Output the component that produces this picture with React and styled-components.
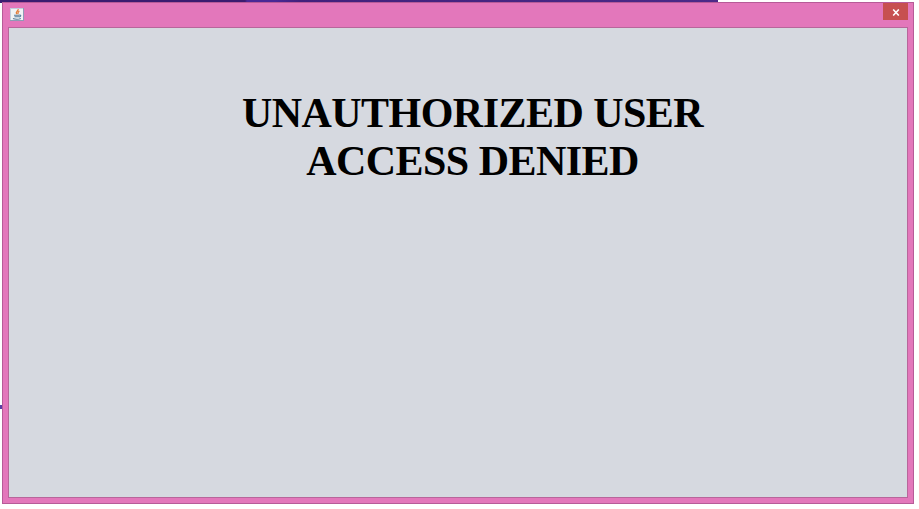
import React from 'react';
import styled, { createGlobalStyle } from 'styled-components';

const GlobalStyle = createGlobalStyle`
  * { box-sizing: border-box; }
  body { margin: 0; background: #fff; overflow: hidden; }
`;

const Desktop = styled.div`
  width: 919px;
  height: 509px;
  padding: 2px 0 0 2px;
  background:
    linear-gradient(#5740a5, #5740a5) 0 405px / 2px 4px no-repeat,
    linear-gradient(90deg, #3b1c70 0, #3b1c70 245px, #4a2896 247px, #4a2896 275px, #42217c 300px, #4b2a88 100%) 0 0 / 718px 3px no-repeat,
    #fff;
`;

const Window = styled.main`
  display: flex;
  flex-direction: column;
  width: 912px;
  height: 502px;
  padding: 0 5px 5px;
  border: 1px solid #b75b98;
  background: #e377bb;
`;

const TitleBar = styled.header`
  display: flex;
  justify-content: space-between;
  align-items: flex-start;
  flex: 0 0 24px;
`;

const AppIcon = styled.svg`
  display: block;
  width: 14px;
  height: 13px;
  margin: 5px 0 0 2px;
`;

const CloseButton = styled.button`
  display: flex;
  align-items: center;
  justify-content: center;
  width: 25px;
  height: 17px;
  margin: 0;
  padding: 1px 0 0;
  border: 0;
  background: #c75050;
`;

const Content = styled.section`
  flex: 1;
  padding: 61px 0 0 29px;
  border: 1px solid #b8669b;
  background: #d6d9e0;
`;

const Message = styled.h1`
  margin: 0;
  color: #000;
  font: bold 42px/48px "Liberation Serif", "Times New Roman", serif;
  letter-spacing: -0.53px;
  text-align: center;
`;

const MessageLine = styled.span`
  display: block;
`;

function JavaIcon() {
  return (
    <AppIcon viewBox="0 0 14 13" aria-hidden="true">
      <rect width="14" height="13" fill="#8f9bb5" />
      <rect width="13" height="12" fill="#c3cedd" />
      <rect x="1" y="1" width="12" height="11" fill="#f0f3f5" />
      <path d="M8.2 1.2C8.6 3 5 3.6 6.6 6.2M9.4 3.2C7.2 4.2 8.5 4.8 7.7 6.3" fill="none" stroke="#e3803e" strokeWidth="1.3" />
      <path d="M4 7.2H9.4M4.5 8.7H9M9.4 7.1C11.5 6.7 11 8.7 9 8.9M3 10.5C5 11.4 9 11.3 10.8 10.4" fill="none" stroke="#587d9b" strokeWidth="1.1" />
    </AppIcon>
  );
}

export default function App() {
  return (
    <>
      <GlobalStyle />
      <Desktop>
        <Window>
          <TitleBar>
            <JavaIcon />
            <CloseButton aria-label="Close">
              <svg width="8" height="7" viewBox="0 0 8 7" aria-hidden="true">
                <path d="M1.2.5 6.8 6.5M6.8.5 1.2 6.5" stroke="#fff" strokeWidth="1.6" />
              </svg>
            </CloseButton>
          </TitleBar>
          <Content>
            <Message>
              <MessageLine>UNAUTHORIZED USER</MessageLine>
              <MessageLine>ACCESS DENIED</MessageLine>
            </Message>
          </Content>
        </Window>
      </Desktop>
    </>
  );
}
